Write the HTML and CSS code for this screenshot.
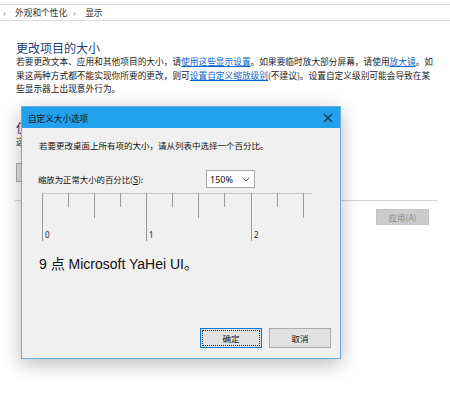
FILE: index.html
```html
<!DOCTYPE html>
<html lang="zh-CN">
<head>
    <meta charset="UTF-8">
    <title>显示 - 自定义大小选项</title>
    <link rel="stylesheet" href="styles.css">
</head>
<body>
    <div class="crumbs">
        <span class="sep">›</span>外观和个性化<span class="sep">›</span>显示
    </div>

    <div class="main">
        <h1>更改项目的大小</h1>
        <p class="desc">
            <span class="line">若要更改文本、应用和其他项目的大小，请<a href="#">使用这些显示设置</a>。如果要临时放大部分屏幕，请使用<a href="#">放大镜</a>。如</span>
            <span class="line">果这两种方式都不能实现你所要的更改，则可<a href="#">设置自定义缩放级别</a>(不建议)。设置自定义级别可能会导致在某</span>
            <span class="line">些显示器上出现意外行为。</span>
        </p>

        <!-- mostly hidden behind the dialog -->
        <h2>仅</h2>
        <p class="desc">
            <span class="line">这</span>
        </p>
        <div class="bg-select"></div>

        <div class="apply-row">
            <button class="apply" disabled>应用(A)</button>
        </div>
    </div>

    <!-- dialog on top of the page -->
    <div class="dialog">
        <div class="titlebar">
            <span class="title">自定义大小选项</span>
            <svg class="close" width="10" height="10" viewBox="0 0 10 10">
                <path d="M1 1 L9 9 M9 1 L1 9" stroke="#1b2a3a" stroke-width="1.1" fill="none"/>
            </svg>
        </div>
        <div class="dlg-body">
            <p class="intro">若要更改桌面上所有项的大小，请从列表中选择一个百分比。</p>

            <div class="scale-row">
                <span class="scale-label">缩放为正常大小的百分比(<u>S</u>):</span>
                <div class="combo">
                    <span>150%</span>
                    <svg width="8" height="5" viewBox="0 0 8 5">
                        <path d="M0.5 0.5 L4 4 L7.5 0.5" stroke="#555" stroke-width="1" fill="none"/>
                    </svg>
                </div>
            </div>

            <svg class="ruler" width="272" height="50" viewBox="0 0 272 50">
                <line x1="0" y1="0.5" x2="270" y2="0.5" stroke="#c4c4c4"/>
                <g stroke="#9a9a9a" stroke-width="1">
                    <line x1="0.5" y1="0" x2="0.5" y2="48"/>
                    <line x1="26.5" y1="0" x2="26.5" y2="14"/>
                    <line x1="52.5" y1="0" x2="52.5" y2="25"/>
                    <line x1="78.5" y1="0" x2="78.5" y2="14"/>
                    <line x1="104.5" y1="0" x2="104.5" y2="48"/>
                    <line x1="130.5" y1="0" x2="130.5" y2="14"/>
                    <line x1="156.5" y1="0" x2="156.5" y2="25"/>
                    <line x1="182.5" y1="0" x2="182.5" y2="14"/>
                    <line x1="209.5" y1="0" x2="209.5" y2="48"/>
                    <line x1="235.5" y1="0" x2="235.5" y2="14"/>
                    <line x1="261.5" y1="0" x2="261.5" y2="25"/>
                </g>
                <g class="ruler-num">
                    <text x="3" y="45">0</text>
                    <text x="107" y="45">1</text>
                    <text x="212" y="45">2</text>
                </g>
            </svg>

            <p class="sample">9 点 Microsoft YaHei UI。</p>

            <div class="buttons">
                <button class="btn default">确定</button>
                <button class="btn">取消</button>
            </div>
        </div>
    </div>
</body>
</html>
```

FILE: styles.css
```css
* {
    margin: 0;
    padding: 0;
    box-sizing: border-box;
}

body {
    font-family: "Noto Sans CJK SC", "Noto Sans", sans-serif;
    background: #fff;
    color: #1e1e1e;
    width: 450px;
    height: 395px;
    overflow: hidden;
}

.crumbs {
    margin-top: 4px;
    height: 17px;
    border-top: 1px solid #dcdcdc;
    border-bottom: 1px solid #dcdcdc;
    padding-left: 3px;
    font-size: 8.7px;
    line-height: 15px;
    color: #333;
}

.crumbs .sep {
    display: inline-block;
    width: 12px;
    color: #777;
}

.crumbs .sep + .sep {
    margin-left: 6px;
}

.main {
    padding: 0 13px 0 16px;
}

h1 {
    margin-top: 19px;
    font-size: 12px;
    font-weight: normal;
    line-height: 15px;
    color: #1e3c78;
}

h2 {
    margin-top: 24px;
    font-size: 12px;
    font-weight: normal;
    line-height: 15px;
    color: #1e3c78;
}

.desc {
    font-size: 8.7px;
    line-height: 13.7px;
    color: #222;
}

.desc .line {
    display: block;
    white-space: nowrap;
}

.desc a {
    color: #0066cc;
    text-decoration: underline;
}

.bg-select {
    margin-top: 14px;
    width: 60px;
    height: 19px;
    border: 1px solid #adadad;
    background: #e1e1e1;
}

.apply-row {
    margin-top: 18px;
    margin-left: -1px;
    border-top: 1px solid #d4d4d4;
    padding-top: 8px;
    display: flex;
    justify-content: flex-end;
    padding-right: 8px;
}

.apply {
    width: 53px;
    height: 16px;
    background: #cccccc;
    border: 1px solid #c4c4c4;
    color: #8a8a8a;
    font-family: inherit;
    font-size: 8.5px;
}

/* dialog */

.dialog {
    position: absolute;
    left: 21px;
    top: 106px;
    width: 320px;
    height: 253px;
    border: 1px solid #6aaee0;
    background: #f0f0f0;
    box-shadow: 0 5px 18px rgba(0, 0, 0, 0.28);
    display: flex;
    flex-direction: column;
}

.titlebar {
    height: 21px;
    background: #23a0ec;
    display: flex;
    align-items: center;
    justify-content: space-between;
    padding: 0 6px 0 6px;
}

.title {
    font-size: 8.6px;
    color: #111;
}

.close {
    margin-right: 1px;
}

.dlg-body {
    flex: 1;
    display: flex;
    flex-direction: column;
    padding: 0 9px 10px 16px;
}

.intro {
    margin-top: 10px;
    font-size: 8.5px;
    line-height: 14px;
    padding-left: 1px;
    color: #111;
}

.scale-row {
    margin-top: 18px;
    display: flex;
    align-items: center;
    height: 18px;
}

.scale-label {
    width: 168px;
    font-size: 8.4px;
    color: #111;
}

.combo {
    width: 49px;
    height: 18px;
    background: #fff;
    border: 1px solid #a8a8a8;
    display: flex;
    align-items: center;
    justify-content: space-between;
    padding: 0 4px 0 3px;
    font-family: "Noto Sans", sans-serif;
    font-size: 9px;
    color: #111;
}

.ruler {
    display: block;
    margin-top: 5px;
    margin-left: 4px;
}

.ruler-num text {
    font-family: "Noto Sans", sans-serif;
    font-size: 8px;
    fill: #222;
}

.sample {
    margin-top: 11px;
    font-family: "Liberation Sans", "Noto Sans CJK SC", sans-serif;
    font-size: 14px;
    line-height: 20px;
    color: #111;
    padding-left: 1px;
}

.buttons {
    margin-top: auto;
    display: flex;
    justify-content: flex-end;
    gap: 7px;
}

.btn {
    width: 62px;
    height: 20px;
    background: #e1e1e1;
    border: 1px solid #adadad;
    font-family: inherit;
    font-size: 8.5px;
    color: #111;
}

.btn.default {
    border: 1px solid #0078d7;
    outline: 1px dotted #333;
    outline-offset: -3px;
}
```
